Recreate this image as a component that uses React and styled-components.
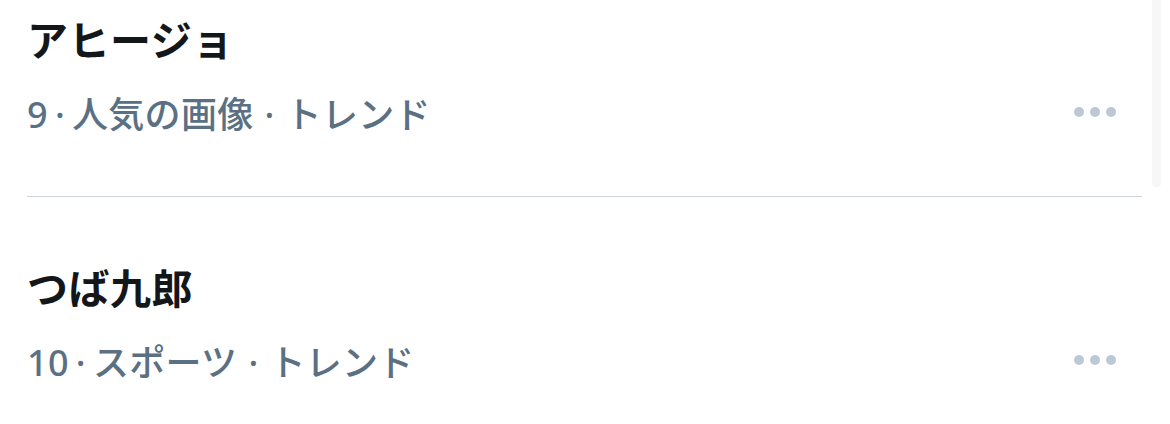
import styled, { createGlobalStyle } from 'styled-components'

const GlobalStyle = createGlobalStyle`
  body {
    margin: 0;
    background: #fff;
    font-family: 'Noto Sans', 'Noto Sans CJK JP', sans-serif;
  }
`

const Page = styled.div`
  display: flex;
  width: 1170px;
  height: 424px;
  overflow: hidden;
`

const List = styled.div`
  flex: 1;
  padding-left: 27px;
`

const Track = styled.div`
  width: 9px;
  height: 187px;
  margin: 0 9px 0 10px;
  background: #f7f7f7;
  border-radius: 0 0 4px 4px;
`

const Item = styled.div`
  display: flex;
  flex-direction: column;
  padding: ${p => p.$pt}px 26px 0 0;
  height: ${p => p.$h}px;
  border-bottom: ${p => (p.$divider ? '1px solid #cfd4d8' : 'none')};
  box-sizing: border-box;
`

const Title = styled.div`
  font-size: 41px;
  font-weight: 700;
  color: #14171a;
  line-height: 54px;
  letter-spacing: 0.5px;
`

const MetaRow = styled.div`
  display: flex;
  justify-content: space-between;
  align-items: center;
  margin-top: 18px;
  height: 54px;
`

const Meta = styled.div`
  font-size: 36px;
  font-weight: 500;
  color: #5b7083;
  letter-spacing: 0.3px;
`

const Sep = styled.span`
  margin: 0 ${p => p.$gap}px;
`

const More = styled.div`
  display: flex;
  gap: 6px;
  span {
    width: 10px;
    height: 10px;
    border-radius: 50%;
    background: #bcc8d3;
  }
`

const trends = [
  { title: 'アヒージョ', rank: '9', cat: '人気の画像', h: 197, pt: 13, divider: true },
  { title: 'つば九郎', rank: '10', cat: 'スポーツ', h: 227, pt: 64 },
]

export default function App() {
  return (
    <Page>
      <GlobalStyle />
      <List>
        {trends.map(t => (
          <Item key={t.title} $h={t.h} $pt={t.pt} $divider={t.divider}>
            <Title>{t.title}</Title>
            <MetaRow>
              <Meta>
                {t.rank}<Sep $gap={7}>·</Sep>{t.cat}<Sep $gap={11}>·</Sep>トレンド
              </Meta>
              <More>
                <span />
                <span />
                <span />
              </More>
            </MetaRow>
          </Item>
        ))}
      </List>
      <Track />
    </Page>
  )
}
